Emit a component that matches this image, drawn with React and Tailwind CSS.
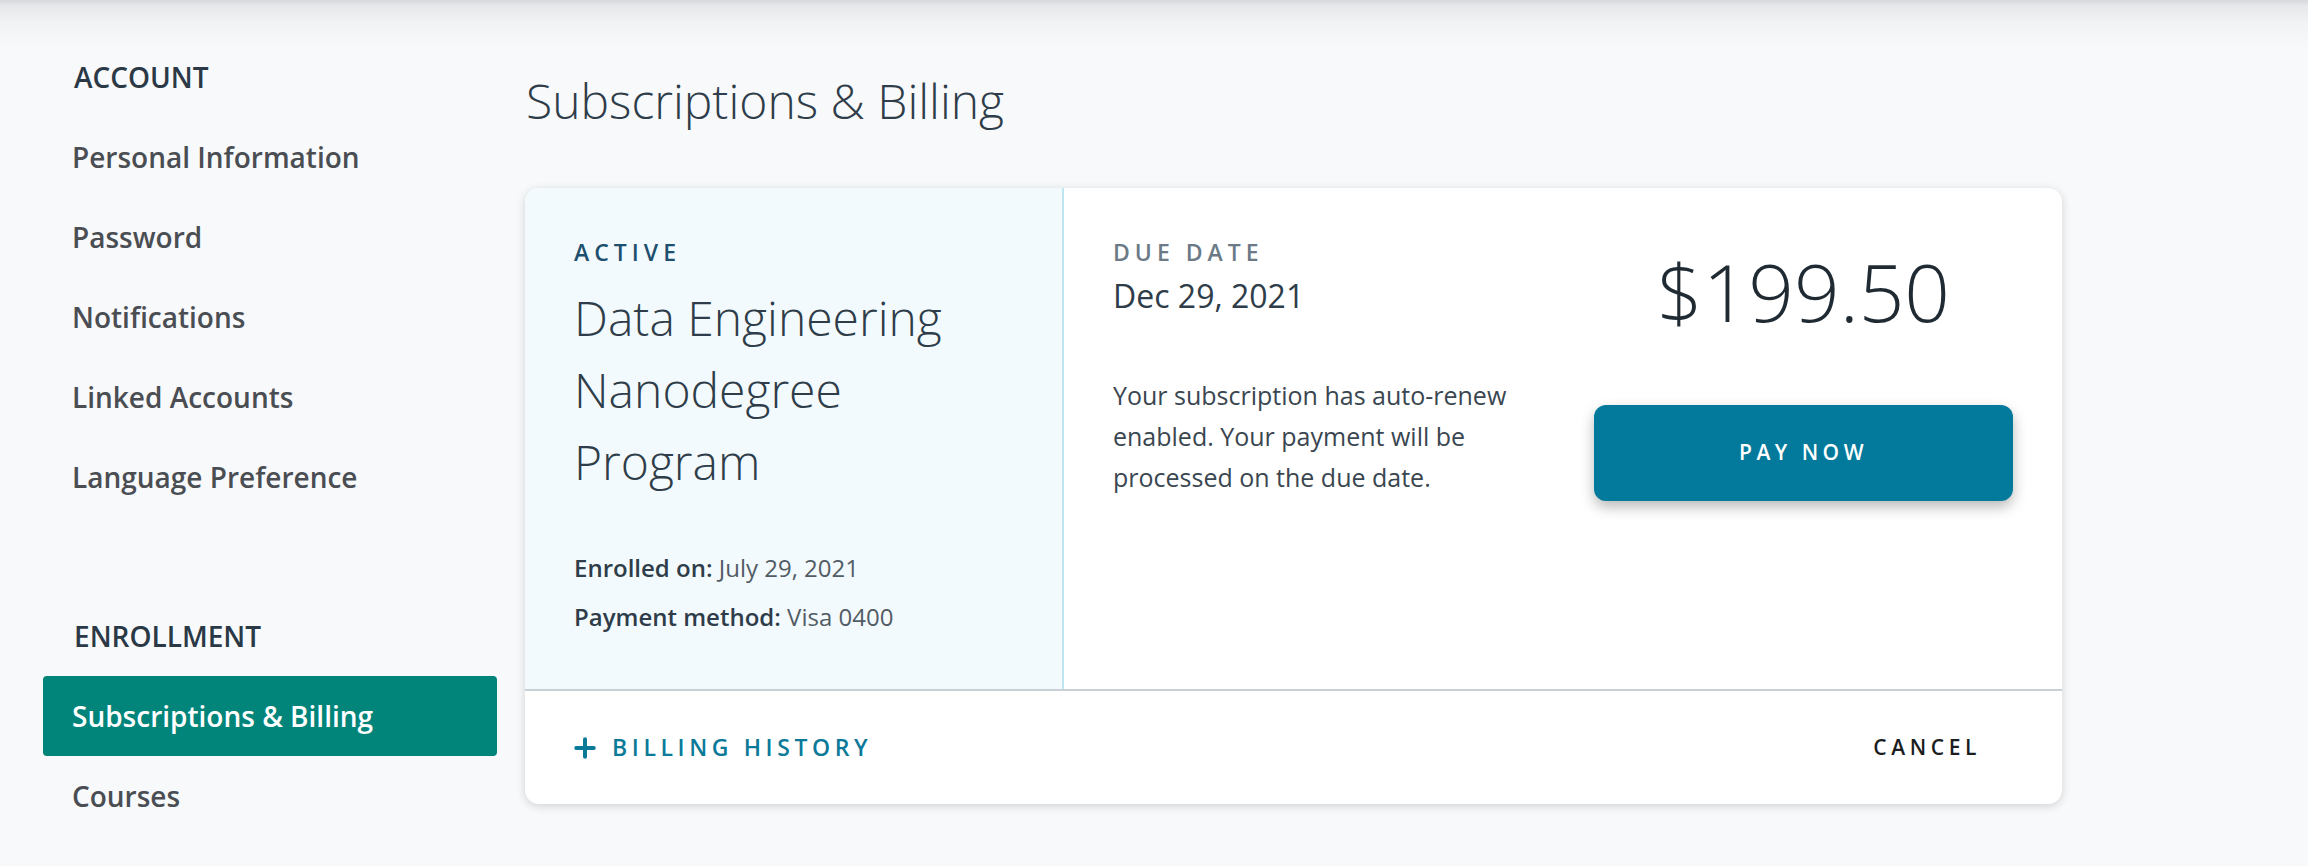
import { Plus } from "lucide-react"

const sideItems = ["Personal Information", "Password", "Notifications", "Linked Accounts", "Language Preference"]

function SideItem({ label, active }) {
  return (
    <div
      className={
        "h-[80px] flex items-center pl-[29px] rounded-[4px] text-[28px] font-semibold " +
        (active ? "bg-[#01857a] text-white" : "text-[#4a4e53]")
      }
    >
      {label}
    </div>
  )
}

export default function App() {
  return (
    <div
      className="min-h-screen bg-[#f8f9fb] bg-[linear-gradient(to_bottom,#d6d8db_0px,#e6e8ea_6px,#f1f2f4_22px,#f8f9fb_48px)] font-['Open_Sans',sans-serif]"
    >
      <div className="flex pl-[43px] gap-[28px]">
        {/* Sidebar */}
        <aside className="w-[454px] pt-[37px]">
          <div className="h-[80px] flex items-center pl-[31px] text-[28px] font-semibold text-[#2b3946]">ACCOUNT</div>
          {sideItems.map((item) => (
            <SideItem key={item} label={item} />
          ))}
          <div className="h-[79px]"></div>
          <div className="h-[80px] flex items-center pl-[31px] text-[28px] font-semibold text-[#2b3946]">ENROLLMENT</div>
          <SideItem label="Subscriptions & Billing" active />
          <SideItem label="Courses" />
        </aside>

        {/* Main */}
        <main className="w-[1537px] pt-[69px]">
          <h1 className="text-[48px] leading-[64px] font-light text-[#2e3d49] pl-[1px]">Subscriptions &amp; Billing</h1>

          <div className="mt-[55px] bg-white rounded-[14px] shadow-[0_2px_10px_rgba(0,0,0,0.16)] overflow-hidden">
            <div className="flex h-[501px]">
              {/* Left panel */}
              <div className="w-[539px] bg-[#f3fafd] border-r-2 border-[#bfe5f1] pl-[49px] pt-[49px]">
                <div className="text-[23px] leading-[30px] font-semibold tracking-[5px] text-[#1d4f6e]">ACTIVE</div>
                <div className="mt-[15px] w-[440px] text-[48px] leading-[72px] font-light text-[#2e3d49]">
                  Data Engineering Nanodegree Program
                </div>
                <div className="mt-[45px] text-[24px] leading-[49px] text-[#525c65]">
                  <div>
                    <span className="font-semibold text-[#2e3d49]">Enrolled on:</span> July 29, 2021
                  </div>
                  <div>
                    <span className="font-semibold text-[#2e3d49]">Payment method:</span> Visa 0400
                  </div>
                </div>
              </div>

              {/* Right panel */}
              <div className="flex-1 flex justify-between pl-[49px] pr-[49px] pt-[49px]">
                <div>
                  <div className="text-[23px] leading-[30px] font-semibold tracking-[5px] text-[#6b7a86]">DUE DATE</div>
                  <div className="mt-[9px] text-[32px] leading-[40px] text-[#2e3d49]">Dec 29, 2021</div>
                  <p className="mt-[59px] w-[420px] text-[25px] leading-[41px] text-[#3a4650]">
                    Your subscription has auto-renew enabled. Your payment will be processed on the due date.
                  </p>
                </div>
                <div className="w-[419px] flex flex-col items-center">
                  <div className="mt-[14px] text-[80px] leading-[80px] font-light text-[#1f2a33]">$199.50</div>
                  <button className="mt-[74px] w-full h-[96px] rounded-[12px] bg-[#037a9b] text-white text-[21px] font-semibold tracking-[4.5px] shadow-[0_6px_14px_rgba(0,0,0,0.28)]">
                    PAY NOW
                  </button>
                </div>
              </div>
            </div>

            {/* Footer */}
            <div className="h-[115px] border-t-2 border-[#c9d0d5] flex items-center justify-between pl-[45px] pr-[81px]">
              <div className="flex items-center gap-[12px] text-[#0b7a99]">
                <Plus className="w-[30px] h-[30px]" strokeWidth={3.2} />
                <span className="text-[23px] font-semibold tracking-[4.6px]">BILLING HISTORY</span>
              </div>
              <span className="text-[21px] font-semibold tracking-[4.6px] text-[#1b1d1f]">CANCEL</span>
            </div>
          </div>
        </main>
      </div>
    </div>
  )
}
